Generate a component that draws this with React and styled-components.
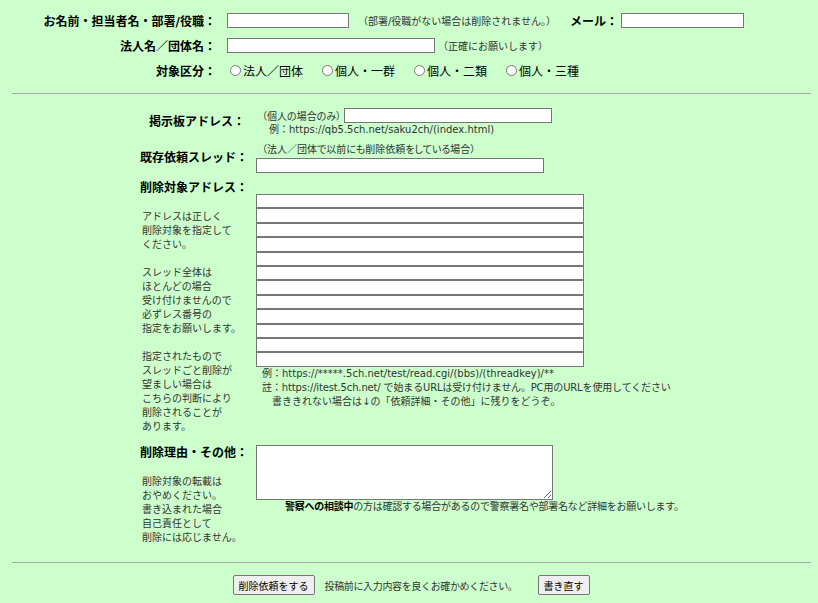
import React from 'react';
import styled, { createGlobalStyle } from 'styled-components';

const GlobalStyle = createGlobalStyle`
  body {
    margin: 0;
    background-color: #ccffcc;
    color: #000;
    font-family: "DejaVu Sans", "Noto Sans CJK JP", sans-serif;
  }
`;

const Page = styled.div`
  width: 818px;
  padding-top: 8px;
  padding-bottom: 9px;
`;

const TopRow = styled.div`
  display: flex;
  align-items: center;
  height: 25px;
`;

const TopLabel = styled.div`
  width: 216px;
  flex-shrink: 0;
  margin-right: 11px;
  text-align: right;
  font-size: 12px;
  font-weight: bold;
  white-space: nowrap;
`;

const TextInput = styled.input`
  display: block;
  box-sizing: border-box;
  width: ${(p) => p.$w}px;
  height: ${(p) => p.$h || 15}px;
  margin: 0;
  margin-left: ${(p) => p.$ml || 0}px;
  margin-top: ${(p) => p.$mt || 0}px;
  padding: 0 2px;
  border: 1px solid #767676;
  border-radius: 0;
  background: #fff;
  font-size: 11px;
`;

const Note = styled.span`
  font-size: 10px;
  color: #333;
  white-space: nowrap;
  margin-left: ${(p) => p.$ml || 0}px;
  font-feature-settings: ${(p) => (p.$tight ? '"palt"' : 'normal')};
`;

const MailLabel = styled.span`
  font-size: 12px;
  font-weight: bold;
  margin-left: 14px;
  margin-right: 3px;
  white-space: nowrap;
`;

const RadioGroup = styled.div`
  display: flex;
  margin-left: 3px;
`;

const RadioItem = styled.label`
  display: flex;
  align-items: center;
  width: 92px;
  font-size: 12px;
  white-space: nowrap;
`;

const Radio = styled.input`
  width: 11px;
  height: 11px;
  margin: 0 2px 0 0;
`;

const Rule = styled.div`
  margin: ${(p) => p.$mt}px 7px 0 12px;
  border-top: 1px solid #a9a9a9;
`;

const Section = styled.div`
  margin-left: 140px;
`;

const Row = styled.div`
  display: flex;
  align-items: ${(p) => (p.$top ? 'flex-start' : 'center')};
  margin-top: ${(p) => p.$mt}px;
`;

const LeftCell = styled.div`
  width: 105px;
  flex-shrink: 0;
  margin-right: 11px;
`;

const RowLabel = styled.div`
  font-size: 12px;
  font-weight: bold;
  line-height: 16px;
  white-space: nowrap;
  text-align: ${(p) => (p.$right ? 'right' : 'left')};
`;

const Desc = styled.div`
  margin-top: 14px;
  padding-left: 2px;
  font-size: 10px;
  line-height: 14px;
  color: #333;
  white-space: nowrap;
`;

const DescLine = styled.div`
  height: 14px;
`;

const RightCell = styled.div`
  padding-top: ${(p) => p.$pt || 0}px;
`;

const InlineLine = styled.div`
  display: flex;
  align-items: center;
  height: 16px;
  padding-left: 6px;
`;

const SmallLine = styled.div`
  font-size: 10px;
  line-height: ${(p) => p.$lh || 14}px;
  color: #333;
  white-space: nowrap;
  padding-left: ${(p) => p.$pl || 6}px;
  letter-spacing: ${(p) => p.$ls || 0}px;
  font-feature-settings: ${(p) => (p.$tight ? '"palt"' : 'normal')};
`;

const Strong = styled.b`
  color: #000;
`;

const TextArea = styled.textarea`
  display: block;
  box-sizing: border-box;
  width: 297px;
  height: 55px;
  margin: 0;
  border: 1px solid #767676;
  background: #fff;
  resize: both;
`;

const ButtonBar = styled.div`
  display: flex;
  align-items: center;
  justify-content: center;
  margin-top: 12px;
  padding-left: 4px;
`;

const Button = styled.button`
  box-sizing: border-box;
  height: 20px;
  padding: 0 5px;
  border: 1px solid #767676;
  border-radius: 2px;
  background: #efefef;
  color: #000;
  font-family: "DejaVu Sans", "Noto Sans CJK JP", sans-serif;
  font-size: 10px;
  white-space: nowrap;
`;

const BarText = styled.span`
  margin: 0 20px 0 10px;
  font-size: 10px;
  letter-spacing: -0.35px;
  color: #333;
  white-space: nowrap;
`;

const addressHelp = [
  'アドレスは正しく',
  '削除対象を指定して',
  'ください。',
  '',
  'スレッド全体は',
  'ほとんどの場合',
  '受け付けませんので',
  '必ずレス番号の',
  '指定をお願いします。',
  '',
  '指定されたもので',
  'スレッドごと削除が',
  '望ましい場合は',
  'こちらの判断により',
  '削除されることが',
  'あります。',
];

const reasonHelp = [
  '削除対象の転載は',
  'おやめください。',
  '書き込まれた場合',
  '自己責任として',
  '削除には応じません。',
];

const categories = ['法人／団体', '個人・一群', '個人・二類', '個人・三種'];

function App() {
  return (
    <Page>
      <GlobalStyle />
      <TopRow>
        <TopLabel>お名前・担当者名・部署/役職：</TopLabel>
        <TextInput $w={122} />
        <Note $ml={9}>（部署/役職がない場合は削除されません。）</Note>
        <MailLabel>メール：</MailLabel>
        <TextInput $w={123} />
      </TopRow>
      <TopRow>
        <TopLabel>法人名／団体名：</TopLabel>
        <TextInput $w={208} />
        <Note $ml={3}>（正確にお願いします）</Note>
      </TopRow>
      <TopRow>
        <TopLabel>対象区分：</TopLabel>
        <RadioGroup>
          {categories.map((c) => (
            <RadioItem key={c}>
              <Radio type="radio" name="kind" />
              {c}
            </RadioItem>
          ))}
        </RadioGroup>
      </TopRow>

      <Rule $mt={10} />

      <Section>
        <Row $mt={13}>
          <LeftCell>
            <RowLabel $right>掲示板アドレス：</RowLabel>
          </LeftCell>
          <RightCell>
            <InlineLine>
              <Note $tight>（個人の場合のみ）</Note>
              <TextInput $w={208} $ml={3} />
            </InlineLine>
            <SmallLine $pl={13} $lh={13}>例：https://qb5.5ch.net/saku2ch/(index.html)</SmallLine>
          </RightCell>
        </Row>

        <Row $mt={7}>
          <LeftCell>
            <RowLabel $right>既存依頼スレッド：</RowLabel>
          </LeftCell>
          <RightCell>
            <SmallLine $tight>（法人／団体で以前にも削除依頼をしている場合）</SmallLine>
            <TextInput $w={288} $mt={1} />
          </RightCell>
        </Row>

        <Row $mt={7} $top>
          <LeftCell>
            <RowLabel>削除対象アドレス：</RowLabel>
            <Desc>
              {addressHelp.map((line, i) => (
                <DescLine key={i}>{line}</DescLine>
              ))}
            </Desc>
          </LeftCell>
          <RightCell $pt={14}>
            {Array.from({ length: 12 }).map((_, i) => (
              <TextInput key={i} $w={328} $h={14.4} />
            ))}
            <SmallLine>例：https://*****.5ch.net/test/read.cgi/(bbs)/(threadkey)/**</SmallLine>
            <SmallLine $ls={-0.15}>註：https://itest.5ch.net/ で始まるURLは受け付けません。PC用のURLを使用してください</SmallLine>
            <SmallLine>　書ききれない場合は↓の「依頼詳細・その他」に残りをどうぞ。</SmallLine>
          </RightCell>
        </Row>

        <Row $mt={11} $top>
          <LeftCell>
            <RowLabel>削除理由・その他：</RowLabel>
            <Desc>
              {reasonHelp.map((line, i) => (
                <DescLine key={i}>{line}</DescLine>
              ))}
            </Desc>
          </LeftCell>
          <RightCell>
            <TextArea />
            <SmallLine $pl={29} $ls={-0.25}>
              <Strong>警察への相談中</Strong>の方は確認する場合があるので警察署名や部署名など詳細をお願いします。
            </SmallLine>
          </RightCell>
        </Row>
      </Section>

      <Rule $mt={17} />

      <ButtonBar>
        <Button type="button">削除依頼をする</Button>
        <BarText>投稿前に入力内容を良くお確かめください。</BarText>
        <Button type="button">書き直す</Button>
      </ButtonBar>
    </Page>
  );
}

export default App;
